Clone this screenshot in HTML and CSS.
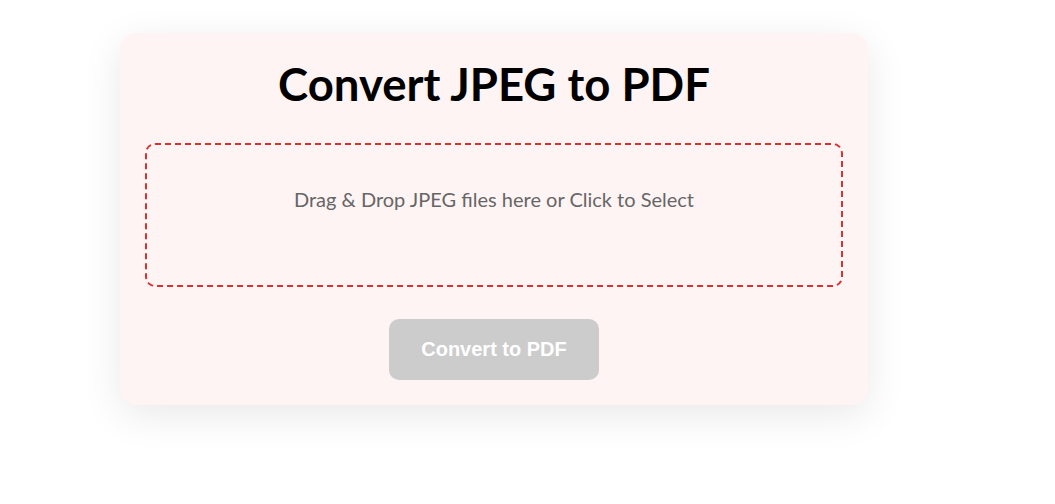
FILE: index.html
```html
<!DOCTYPE html>
<html lang="en">
<head>
  <meta charset="UTF-8">
  <title>Convert JPEG to PDF</title>
  <link rel="stylesheet" href="styles.css">
</head>
<body>

  <!-- Tarjeta principal -->
  <div class="tarjeta">
    <h1 class="titulo">Convert JPEG to PDF</h1>

    <!-- Zona para soltar archivos -->
    <div class="zona" id="zona">
      <p class="zona-texto">Drag &amp; Drop JPEG files here or Click to Select</p>
    </div>

    <button class="boton" id="convertir" disabled>Convert to PDF</button>
  </div>

</body>
</html>
```

FILE: styles.css
```css
html, body {
  height: 100%;
}

body {
  margin: 0;
  background: #ffffff;
  font-family: Lato, 'Noto Sans', sans-serif;
}

.tarjeta {
  box-sizing: border-box;
  width: 748px;
  margin: 33px 0 0 120px;
  padding: 25px;
  background-color: #fff4f4;
  border-radius: 16px;
  box-shadow: 0 10px 40px rgba(0,0,0,0.09);
  display: flex;
  flex-direction: column;
  align-items: center;
}

.titulo {
  margin: 0;
  font-size: 45.5px;
  line-height: 52px;
  font-weight: 700;
  color: #000;
}

.zona {
  box-sizing: border-box;
  width: 100%;
  height: 144px;
  margin-top: 33px;
  border: 2px dashed #d93030;
  border-radius: 10px;
  text-align: center;
}

.zona-texto {
  margin: 42px 0 0;
  font-size: 20px;
  line-height: 24px;
  color: #666;
}

.boton {
  margin-top: 32px;
  padding: 0 32px;
  height: 61px;
  font-family: 'Liberation Sans', Arial, sans-serif;
  font-size: 20px;
  font-weight: 700;
  color: #fff;
  background-color: #ccc;
  border: none;
  border-radius: 10px;
}
```
